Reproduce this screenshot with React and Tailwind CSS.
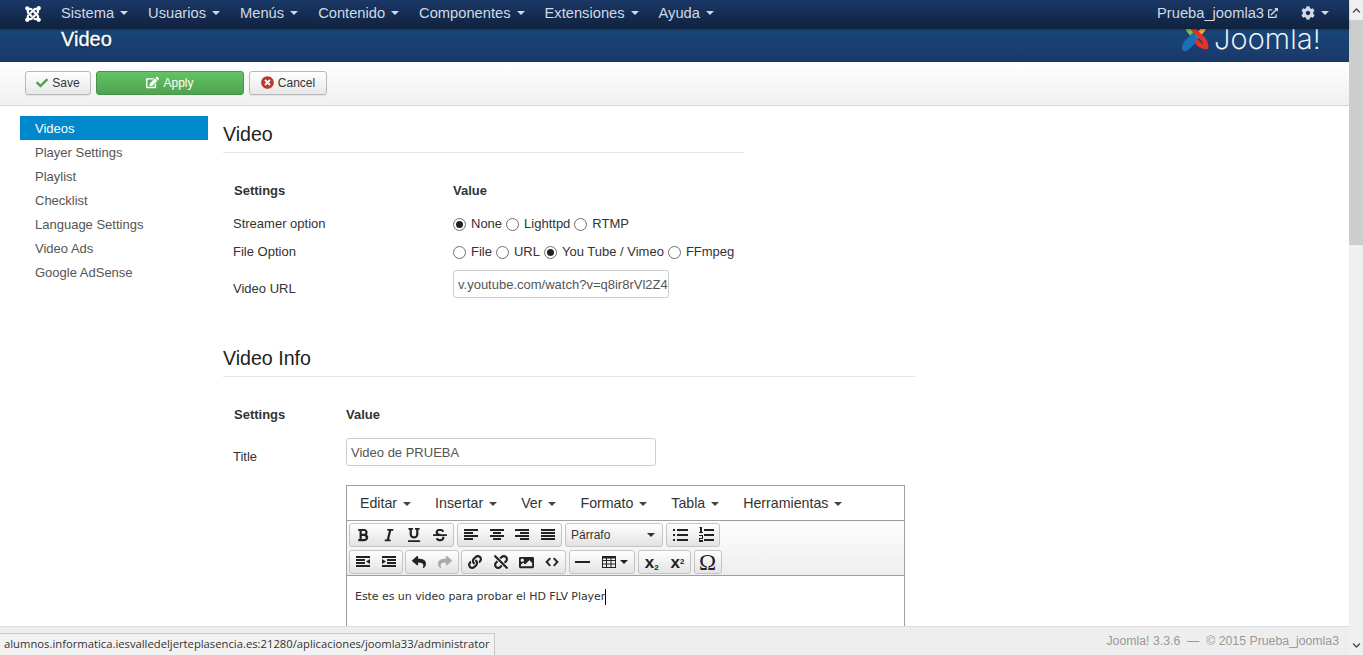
import { FaJoomla, FaCheck, FaEdit, FaTimesCircle, FaCog, FaExternalLinkAlt, FaBold, FaItalic, FaUnderline, FaStrikethrough, FaReply, FaShare, FaLink, FaUnlink, FaImage, FaChevronUp, FaChevronDown } from "react-icons/fa";

const Caret = ({ className = "" }) => (
  <span className={`inline-block w-0 h-0 border-x-4 border-t-4 border-x-transparent border-t-current ${className}`} />
);

const Radio = ({ on }) => (
  <span className="w-[13px] h-[13px] rounded-full border border-[#6f6f6f] bg-white flex items-center justify-center shrink-0">
    {on && <span className="w-[7px] h-[7px] rounded-full bg-[#222]" />}
  </span>
);

function RadioRow({ items }) {
  return (
    <div className="flex items-center gap-[4px] text-[13px] text-[#333] whitespace-nowrap">
      {items.map(([label, on]) => (
        <label key={label} className="flex items-center gap-[5px]">
          <Radio on={on} />
          <span>{label}</span>
        </label>
      ))}
    </div>
  );
}

// bars for the editor's align icons: [x, y, w]
const Bars = ({ rows, h = 2 }) => (
  <svg width="16" height="16" viewBox="0 0 16 16" fill="#222">
    {rows.map(([x, y, w]) => (
      <rect key={y} x={x} y={y} width={w} height={h} />
    ))}
  </svg>
);

const IconIndentLeft = () => (
  <svg width="16" height="16" viewBox="0 0 16 16" fill="#222">
    <rect x="1" y="2" width="14" height="2" />
    <rect x="1" y="5" width="9" height="2" />
    <rect x="1" y="8" width="9" height="2" />
    <rect x="1" y="11" width="14" height="2" />
    <path d="M15 5v5l-4-2.5z" />
  </svg>
);

const IconIndentRight = () => (
  <svg width="16" height="16" viewBox="0 0 16 16" fill="#222">
    <rect x="1" y="2" width="14" height="2" />
    <rect x="6" y="5" width="9" height="2" />
    <rect x="6" y="8" width="9" height="2" />
    <rect x="1" y="11" width="14" height="2" />
    <path d="M1 5v5l4-2.5z" />
  </svg>
);

const IconBullets = () => (
  <svg width="16" height="16" viewBox="0 0 16 16" fill="#222">
    <rect x="5" y="2" width="11" height="2" />
    <rect x="5" y="7" width="11" height="2" />
    <rect x="5" y="12" width="11" height="2" />
    <rect x="1" y="2" width="2" height="2" />
    <rect x="1" y="7" width="2" height="2" />
    <rect x="1" y="12" width="2" height="2" />
  </svg>
);

const IconNumbers = () => (
  <svg width="16" height="16" viewBox="0 0 16 16" fill="#222">
    <rect x="6" y="2" width="10" height="2" />
    <rect x="6" y="7" width="10" height="2" />
    <rect x="6" y="12" width="10" height="2" />
    <path d="M2 0h2v5h1v1H1V5h1V1H1z" />
    <path d="M1 8h4v4H2v1h3v2H1v-4h3v-2H1z" />
  </svg>
);

const IconCode = () => (
  <svg width="14" height="14" viewBox="0 0 16 16" fill="none" stroke="#222" strokeWidth="2.2">
    <path d="M6 3.5 1.8 8 6 12.5M10 3.5 14.2 8 10 12.5" />
  </svg>
);

const IconTable = () => (
  <svg width="16" height="16" viewBox="0 0 16 16" fill="none" stroke="#222" strokeWidth="1">
    <rect x="1.5" y="2.5" width="13" height="11" />
    <path d="M1 3.5h14" strokeWidth="2" />
    <path d="M1.5 6.5h13M1.5 10h13M5.5 3v10M10 3v10" />
  </svg>
);

const TB = ({ children, className = "w-[25.75px]" }) => (
  <span className={`h-full flex items-center justify-center text-[#222] ${className}`}>{children}</span>
);

const Group = ({ children, className = "" }) => (
  <div className={`h-[24px] flex items-center rounded-[3px] border border-[#c5c5c5] bg-gradient-to-b from-white to-[#e3e3e3] ${className}`}>
    {children}
  </div>
);

function JoomlaMark() {
  return (
    <svg width="30" height="34" viewBox="0 0 30 34" fill="none" strokeLinecap="round" strokeWidth="4.6">
      <path d="M23 5c1 3-1 5-3 7l-7 7" stroke="#f9a541" />
      <path d="M6 5c0 4 2 6 5 9l3 3" stroke="#7ac143" />
      <path d="M14 14l-8 8c-2 2-3 4-2 7" stroke="#1c6fb8" />
      <path d="M3 28h3l3-3 6-6" stroke="#1c6fb8" />
      <path d="M13 10l9 9c2 2 3 4 3 8" stroke="#e4312b" />
      <path d="M16 22l3 3c2 1 4 2 6 2" stroke="#e4312b" />
    </svg>
  );
}

const navItems = ["Sistema", "Usuarios", "Menús", "Contenido", "Componentes", "Extensiones", "Ayuda"];
const sideItems = ["Videos", "Player Settings", "Playlist", "Checklist", "Language Settings", "Video Ads", "Google AdSense"];

export default function App() {
  return (
    <div className="w-screen h-screen overflow-hidden flex relative bg-white font-['Liberation_Sans',Arial,sans-serif] text-[13px] text-[#333]">
      <div className="flex-1 min-w-0 flex flex-col">
        {/* top nav, sits over the top of the logo */}
        <div className="relative z-10 h-[29px] shrink-0 flex items-center pb-[2px] bg-gradient-to-b from-[#1a3867] to-[#10223e] text-[#d0d9e4] text-[14.7px] shadow-[0_1px_2px_rgba(0,0,0,.3)]">
          <FaJoomla className="ml-[24px] mr-[19px] text-white text-[18px] shrink-0" />
          <div className="flex items-center gap-[20px]">
            {navItems.map((n) => (
              <span key={n} className="flex items-center gap-[6px]">
                {n}
                <Caret />
              </span>
            ))}
          </div>
          <div className="ml-auto flex items-center pr-[20px]">
            <span>Prueba_joomla3</span>
            <FaExternalLinkAlt className="ml-[4px] text-[10px]" />
            <FaCog className="ml-[23px] mr-[6px] text-[14px]" />
            <Caret />
          </div>
        </div>

        {/* title bar */}
        <div className="h-[33px] shrink-0 flex bg-gradient-to-b from-[#17477a] to-[#1a3867] text-white">
          <h1 className="ml-[61px] mt-[-1px] text-[20px] leading-[22px] [text-shadow:0_1px_2px_rgba(0,0,0,.6)] [-webkit-text-stroke:0.3px_white]">Video</h1>
          <div className="ml-auto mr-[28px] mt-[-9px] flex items-start h-[40px]">
            <JoomlaMark />
            <span className="ml-[3px] mt-[9px] font-['Inter',sans-serif] font-extralight text-[29px] leading-[20px] tracking-[0.2px] [-webkit-text-stroke:0.2px_white]">Joomla!</span>
          </div>
        </div>

        {/* toolbar */}
        <div className="h-[44px] shrink-0 flex items-center pl-[25px] pb-[2px] gap-[5px] border-b border-[#d4d4d4] bg-gradient-to-b from-white to-[#f0f0f0] text-[12px]">
          <button className="w-[66px] h-[24px] flex items-center justify-center gap-[4px] rounded-[3px] border border-[#b9b9b9] bg-gradient-to-b from-white to-[#e8e8e8] shadow-[0_1px_1px_rgba(0,0,0,.08)]">
            <FaCheck className="text-[#51a351] text-[12px]" />
            Save
          </button>
          <button className="w-[148px] h-[24px] flex items-center justify-center gap-[4px] rounded-[3px] border border-[#46954a] bg-gradient-to-b from-[#62c462] to-[#51a351] text-white">
            <FaEdit className="text-[13px]" />
            Apply
          </button>
          <button className="w-[78px] h-[24px] flex items-center justify-center gap-[4px] rounded-[3px] border border-[#b9b9b9] bg-gradient-to-b from-white to-[#e8e8e8] shadow-[0_1px_1px_rgba(0,0,0,.08)]">
            <FaTimesCircle className="text-[#bd362f] text-[13px]" />
            Cancel
          </button>
        </div>

        {/* body */}
        <div className="flex-1 min-h-0 overflow-hidden flex pl-[20px] pt-[10px]">
          <ul className="w-[188px] mr-[15px] shrink-0 text-[#555]">
            {sideItems.map((s, i) => (
              <li key={s} className={`h-[24px] leading-[26px] pl-[15px] ${i === 0 ? "bg-[#0088cc] text-white" : ""}`}>
                {s}
              </li>
            ))}
          </ul>

          <div className="flex-1 min-w-0">
            <div className="w-[521px]">
              <h3 className="h-[37px] pt-[2px] flex items-center border-b border-[#e5e5e5] text-[19.6px] text-[#222]">Video</h3>
              <div className="mt-[25px] h-[24px] pt-[2px] flex items-center font-bold">
                <span className="w-[230px] pl-[11px]">Settings</span>
                <span>Value</span>
              </div>
              <div className="mt-[9px] h-[24px] pt-[2px] flex items-center">
                <span className="w-[230px] pl-[10px]">Streamer option</span>
                <RadioRow items={[["None", true], ["Lighttpd"], ["RTMP"]]} />
              </div>
              <div className="mt-[4px] h-[24px] pt-[2px] flex items-center">
                <span className="w-[230px] pl-[10px]">File Option</span>
                <RadioRow items={[["File"], ["URL"], ["You Tube / Vimeo", true], ["FFmpeg"]]} />
              </div>
              <div className="mt-[7px] h-[28px] flex items-center">
                <span className="w-[230px] pl-[10px] pt-[10px]">Video URL</span>
                <div className="w-[216px] h-[28px] rounded-[3px] border border-[#cccccc] pl-[4px] text-[#555] leading-[28px] whitespace-nowrap">
                  v.youtube.com/watch?v=q8ir8rVl2Z4
                </div>
              </div>
            </div>

            <div className="w-[692px] mt-[42px]">
              <h3 className="h-[37px] pt-[2px] flex items-center border-b border-[#e5e5e5] text-[19.6px] text-[#222]">Video Info</h3>
              <div className="mt-[25px] h-[24px] pt-[2px] flex items-center font-bold">
                <span className="w-[123px] pl-[11px]">Settings</span>
                <span>Value</span>
              </div>
              <div className="mt-[12px] h-[28px] flex items-center">
                <span className="w-[123px] pl-[10px] pt-[10px]">Title</span>
                <div className="w-[310px] h-[28px] rounded-[3px] border border-[#cccccc] px-[4px] text-[#555] leading-[28px]">
                  Video de PRUEBA
                </div>
              </div>

              {/* editor */}
              <div className="mt-[19px] ml-[123px] w-[559px] h-[220px] border border-[#9e9e9e]">
                <div className="h-[35px] pt-[2px] flex items-center pl-[13px] gap-[24px] border-b border-[#9e9e9e] text-[14.2px] text-[#333]">
                  {["Editar", "Insertar", "Ver", "Formato", "Tabla", "Herramientas"].map((m) => (
                    <span key={m} className="flex items-center gap-[6px]">
                      {m}
                      <Caret className="text-[#444]" />
                    </span>
                  ))}
                </div>
                <div className="h-[55px] px-[2px] pt-[2px] flex flex-col gap-[3px] border-b border-[#9e9e9e] bg-gradient-to-b from-[#fdfdfd] to-[#eeeeee]">
                  <div className="flex gap-[3px]">
                    <Group>
                      <TB><FaBold className="text-[14px]" /></TB>
                      <TB><FaItalic className="text-[14px]" /></TB>
                      <TB><FaUnderline className="text-[14px]" /></TB>
                      <TB><FaStrikethrough className="text-[14px]" /></TB>
                    </Group>
                    <Group>
                      <TB><Bars rows={[[1, 2, 14], [1, 5, 9], [1, 8, 14], [1, 11, 9]]} /></TB>
                      <TB><Bars rows={[[1, 2, 14], [4, 5, 8], [1, 8, 14], [4, 11, 8]]} /></TB>
                      <TB><Bars rows={[[1, 2, 14], [6, 5, 9], [1, 8, 14], [6, 11, 9]]} /></TB>
                      <TB><Bars rows={[[1, 2, 14], [1, 5, 14], [1, 8, 14], [1, 11, 14]]} /></TB>
                    </Group>
                    <Group className="w-[98px] justify-between pl-[5px] pr-[7px] text-[12px] text-[#333]">
                      <span>Párrafo</span>
                      <Caret />
                    </Group>
                    <Group>
                      <TB><IconBullets /></TB>
                      <TB><IconNumbers /></TB>
                    </Group>
                  </div>
                  <div className="flex gap-[2.5px]">
                    <Group>
                      <TB><IconIndentLeft /></TB>
                      <TB><IconIndentRight /></TB>
                    </Group>
                    <Group>
                      <TB><FaReply className="text-[14px]" /></TB>
                      <TB><FaShare className="text-[14px] text-[#aaa]" /></TB>
                    </Group>
                    <Group>
                      <TB><FaLink className="text-[14px]" /></TB>
                      <TB><FaUnlink className="text-[14px]" /></TB>
                      <TB><FaImage className="text-[15px]" /></TB>
                      <TB><IconCode /></TB>
                    </Group>
                    <Group>
                      <TB><span className="w-[15px] h-[2px] bg-[#222]" /></TB>
                      <TB className="w-[39px] gap-[3px]"><IconTable /><Caret /></TB>
                    </Group>
                    <Group>
                      <TB><span className="font-bold text-[17px] leading-none">x<sub className="text-[8px]">2</sub></span></TB>
                      <TB><span className="font-bold text-[17px] leading-none">x<sup className="text-[8px]">2</sup></span></TB>
                    </Group>
                    <Group>
                      <TB><span className="text-[23px] leading-none font-['Liberation_Serif',serif]">Ω</span></TB>
                    </Group>
                  </div>
                </div>
                <div className="pl-[8px] pt-[13px] font-['DejaVu_Sans',Verdana,sans-serif] text-[11px] tracking-[-0.05px] leading-[14px] text-[#333] flex items-center">
                  Este es un video para probar el HD FLV Player
                  <span className="w-px h-[16px] bg-black" />
                </div>
              </div>
            </div>
          </div>
        </div>

        {/* footer */}
        <div className="h-[29px] shrink-0 flex items-center justify-end pr-[10px] pt-[1px] border-t border-[#dcdcdc] bg-[#eeeeee] text-[#999] text-[12.3px]">
          Joomla! 3.3.6 &nbsp;— &nbsp;© 2015 Prueba_joomla3
        </div>
      </div>

      {/* page scrollbar */}
      <div className="w-[14px] shrink-0 flex flex-col bg-[#f0f0f0] text-[#505050]">
        <div className="h-[20px] bg-[#f0f0f0] flex items-center justify-center"><FaChevronUp className="text-[9px]" /></div>
        <div className="h-[225px] bg-[#cdcdcd]" />
        <div className="flex-1" />
        <div className="h-[20px] flex items-center justify-center"><FaChevronDown className="text-[9px]" /></div>
      </div>

      {/* browser status tooltip */}
      <div className="absolute left-0 bottom-0 h-[22px] w-[495px] flex items-center pl-[4px] border-t border-r border-[#c8c8c8] bg-[#f2f2f2] font-['Open_Sans',sans-serif] text-[11.25px] text-[#333] whitespace-nowrap">
        alumnos.informatica.iesvalledeljerteplasencia.es:21280/aplicaciones/joomla33/administrator
      </div>
    </div>
  );
}
